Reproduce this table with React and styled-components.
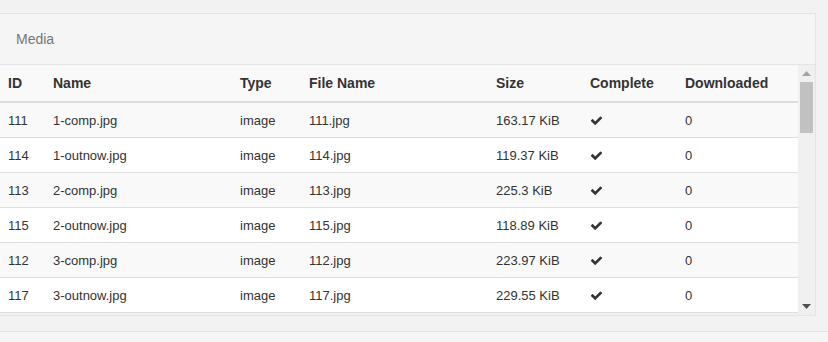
import React from "react";
import styled, { createGlobalStyle } from "styled-components";

const Global = createGlobalStyle`
  html, body { margin: 0; padding: 0; background: #f2f2f2; overflow: hidden; }
  body { font-family: "Liberation Sans", Arial, sans-serif; color: #333; }
`;

const Page = styled.div`
  width: 828px;
  height: 342px;
  display: flex;
  flex-direction: column;
  padding-top: 13px;
  box-sizing: border-box;
`;

const Panel = styled.section`
  margin: 0 12px 0 -1px;
  border: 1px solid #e4e4e4;
  background: #f1f1f1;
  display: flex;
  flex-direction: column;
`;

const Heading = styled.div`
  height: 50px;
  display: flex;
  align-items: center;
  padding: 0 16px;
  background: #f5f5f5;
  border-bottom: 1px solid #e4e4e4;
  color: #777;
  font-size: 14px;
`;

const Body = styled.div`
  display: flex;
  height: 250px;
`;

const TableWrap = styled.div`
  flex: 1;
  overflow: hidden;
`;

const cols = "45px 187px 69px 187px 94px 95px 1fr";

const HeadRow = styled.div`
  display: grid;
  grid-template-columns: ${cols};
  height: 36px;
  align-items: center;
  background: #f9f9f9;
  border-bottom: 2px solid #dddddd;
  font-weight: bold;
  font-size: 14px;
  color: #333;
`;

const Row = styled.div`
  display: grid;
  grid-template-columns: ${cols};
  height: 34px;
  align-items: center;
  background: ${(p) => (p.$striped ? "#f9f9f9" : "#ffffff")};
  border-bottom: 1px solid #dddddd;
  font-size: 13px;
  color: #333;
`;

const Cell = styled.div`
  padding: 0 8px;
  white-space: nowrap;
  display: flex;
  align-items: center;
`;

const Scrollbar = styled.div`
  width: 17px;
  background: #f0f0f0;
  display: flex;
  flex-direction: column;
  align-items: center;
`;

const ArrowBtn = styled.div`
  height: 17px;
  width: 17px;
  display: flex;
  align-items: center;
  justify-content: center;
`;

const Track = styled.div`
  flex: 1;
  width: 100%;
  display: flex;
  justify-content: center;
`;

const Thumb = styled.div`
  width: 13px;
  height: 51px;
  background: #c1c1c1;
`;

const Footer = styled.div`
  margin-top: 15px;
  flex: 1;
  border-top: 1px solid #e3e3e3;
  background: #f5f5f5;
`;

const Check = () => (
  <svg width="13" height="13" viewBox="0 0 1792 1792" aria-hidden="true">
    <path
      fill="#333"
      d="M1671 566q0 40-28 68l-724 724-136 136q-28 28-68 28t-68-28l-136-136-362-362q-28-28-28-68t28-68l136-136q28-28 68-28t68 28l294 295 656-657q28-28 68-28t68 28l136 136q28 28 28 68z"
    />
  </svg>
);

const Tri = ({ up, color }) => (
  <svg width="9" height="5" viewBox="0 0 9 5" aria-hidden="true">
    <path d={up ? "M4.5 0L9 5H0z" : "M0 0H9L4.5 5z"} fill={color} />
  </svg>
);

const data = [
  ["111", "1-comp.jpg", "image", "111.jpg", "163.17 KiB"],
  ["114", "1-outnow.jpg", "image", "114.jpg", "119.37 KiB"],
  ["113", "2-comp.jpg", "image", "113.jpg", "225.3 KiB"],
  ["115", "2-outnow.jpg", "image", "115.jpg", "118.89 KiB"],
  ["112", "3-comp.jpg", "image", "112.jpg", "223.97 KiB"],
  ["117", "3-outnow.jpg", "image", "117.jpg", "229.55 KiB"],
];

const headers = ["ID", "Name", "Type", "File Name", "Size", "Complete", "Downloaded"];

export default function App() {
  return (
    <>
      <Global />
      <Page>
        <Panel>
          <Heading>Media</Heading>
          <Body>
            <TableWrap>
              <HeadRow>
                {headers.map((h) => (
                  <Cell key={h}>{h}</Cell>
                ))}
              </HeadRow>
              {data.map((r, i) => (
                <Row key={r[0]} $striped={i % 2 === 0}>
                  {r.map((c, j) => (
                    <Cell key={j}>{c}</Cell>
                  ))}
                  <Cell>
                    <Check />
                  </Cell>
                  <Cell>0</Cell>
                </Row>
              ))}
            </TableWrap>
            <Scrollbar>
              <ArrowBtn>
                <Tri up color="#a3a3a3" />
              </ArrowBtn>
              <Track>
                <Thumb />
              </Track>
              <ArrowBtn>
                <Tri color="#505050" />
              </ArrowBtn>
            </Scrollbar>
          </Body>
        </Panel>
        <Footer />
      </Page>
    </>
  );
}
